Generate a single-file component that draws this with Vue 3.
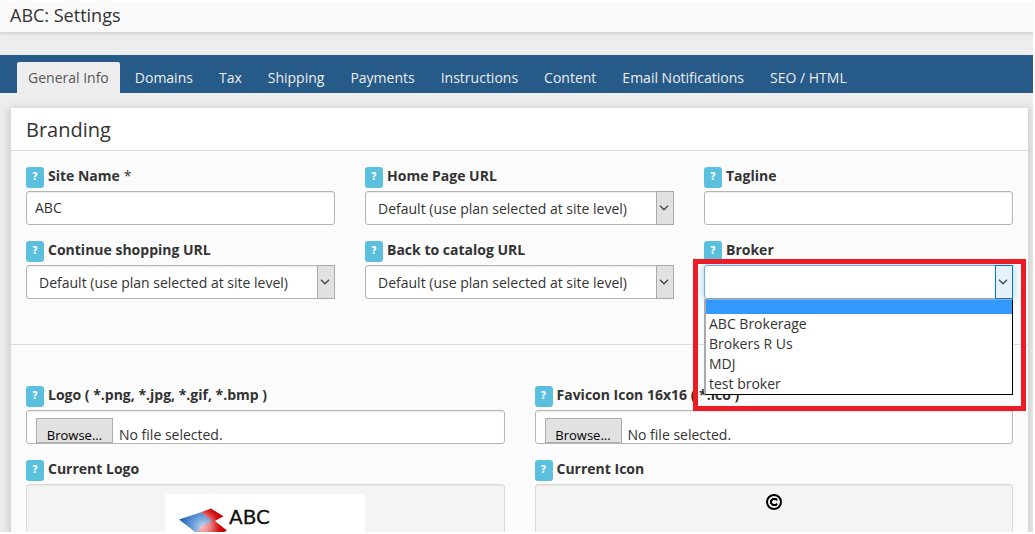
<script setup>
import { ref } from 'vue'

const tabs = ['General Info', 'Domains', 'Tax', 'Shipping', 'Payments', 'Instructions', 'Content', 'Email Notifications', 'SEO / HTML']
const planDefault = 'Default (use plan selected at site level)'
const fields = [
  { id: 'site-name', label: 'Site Name', required: true, type: 'text', value: 'ABC' },
  { id: 'home-url', label: 'Home Page URL', type: 'select' },
  { id: 'tagline', label: 'Tagline', type: 'text', value: '' },
  { id: 'continue-url', label: 'Continue shopping URL', type: 'select' },
  { id: 'catalog-url', label: 'Back to catalog URL', type: 'select' },
  { id: 'broker', label: 'Broker', type: 'broker' }
]
const brokers = ['', 'ABC Brokerage', 'Brokers R Us', 'MDJ', 'test broker']
const broker = ref('')
</script>

<template>
  <div class="page">
    <header class="title-bar"><h1>ABC: Settings</h1></header>
    <nav class="tabs">
      <a v-for="(tab, i) in tabs" :key="tab" href="#" class="tab" :class="{ active: i === 0 }">{{ tab }}</a>
    </nav>
    <main class="panel">
      <h2>Branding</h2>
      <section class="grid three">
        <div v-for="f in fields" :key="f.id" class="field">
          <div class="caption">
            <button type="button" class="help">?</button>
            <label :for="f.id">{{ f.label }}</label><span v-if="f.required" class="star">*</span>
          </div>
          <input v-if="f.type === 'text'" :id="f.id" class="control" type="text" :value="f.value">
          <div v-else class="select" :class="{ open: f.type === 'broker' }">
            <select v-if="f.type === 'select'" :id="f.id" class="control"><option>{{ planDefault }}</option></select>
            <select v-else :id="f.id" v-model="broker" class="control">
              <option v-for="b in brokers" :key="b" :value="b">{{ b }}</option>
            </select>
            <span class="arrow">
              <svg width="10" height="6" viewBox="0 0 10 6"><path d="M1 .8 5 4.8 9 .8" /></svg>
            </span>
            <template v-if="f.type === 'broker'">
              <ul class="menu" role="listbox" aria-label="Broker">
                <li v-for="b in brokers" :key="b" role="option" :aria-selected="b === broker" :class="{ current: b === broker }">{{ b }}</li>
              </ul>
              <div class="highlight"></div>
            </template>
          </div>
        </div>
      </section>
      <section class="grid two">
        <div class="field">
          <div class="caption">
            <button type="button" class="help">?</button>
            <label for="logo">Logo ( *.png, *.jpg, *.gif, *.bmp )</label>
          </div>
          <label class="control file" for="logo">
            <input id="logo" type="file"><span class="browse">Browse...</span><span>No file selected.</span>
          </label>
        </div>
        <div class="field">
          <div class="caption">
            <button type="button" class="help">?</button>
            <label for="favicon">Favicon Icon 16x16 ( *.ico )</label>
          </div>
          <label class="control file" for="favicon">
            <input id="favicon" type="file"><span class="browse">Browse...</span><span>No file selected.</span>
          </label>
        </div>
        <div class="field">
          <div class="caption"><button type="button" class="help">?</button><span class="name">Current Logo</span></div>
          <div class="preview">
            <svg class="logo" width="200" height="60" viewBox="0 0 200 60">
              <defs>
                <radialGradient id="blue" gradientUnits="userSpaceOnUse" cx="39" cy="34" r="24">
                  <stop offset="0" stop-color="#d3e2f5" /><stop offset=".45" stop-color="#6fa3dc" /><stop offset="1" stop-color="#2765b8" />
                </radialGradient>
                <radialGradient id="red" gradientUnits="userSpaceOnUse" cx="36" cy="32" r="24">
                  <stop offset="0" stop-color="#f6c9cb" /><stop offset=".4" stop-color="#e88084" /><stop offset=".75" stop-color="#d31212" /><stop offset="1" stop-color="#c40000" />
                </radialGradient>
              </defs>
              <path d="M14 25.500 36 18.200 48 27 36 38H30Z" fill="url(#blue)" />
              <path d="M36 18.200 46 14.500 58.500 22.300 50 27 62 36.500 48 44H30L36 32 47 27Z" fill="url(#red)" />
              <text x="64" y="30">ABC</text>
            </svg>
          </div>
        </div>
        <div class="field">
          <div class="caption"><button type="button" class="help">?</button><span class="name">Current Icon</span></div>
          <div class="preview">
            <svg width="16" height="16" viewBox="0 0 16 16" fill="none" stroke="#000" stroke-width="2">
              <circle cx="8" cy="8" r="7" /><path d="M11 6.500 10 5H7L5 7v2l2 2h3l1-1.500" />
            </svg>
          </div>
        </div>
      </section>
    </main>
  </div>
</template>

<style>
body {
  margin: 0;
  background: #fff;
}
</style>

<style scoped>
* {
  box-sizing: border-box;
}
.page {
  height: calc(100vh - 3px);
  margin: 1px 2px 2px 0;
  overflow: hidden;
  background: #ededed;
  color: #333;
  font: 14px/20px "Open Sans", sans-serif;
}
.title-bar {
  padding: 0 10px;
  background: #fafafa;
  border-bottom: 1px solid #d8d8d8;
  box-shadow: 0 1px 3px rgba(0, 0, 0, 0.12);
}
h1 {
  margin: 0;
  padding-bottom: 3px;
  font-size: 18px;
  line-height: 28px;
  font-weight: 400;
}
.tabs {
  display: flex;
  gap: 4px;
  margin-top: 22px;
  padding: 7px 17px 0;
  background: #265a88;
}
.tab {
  padding: 6px 11px 5px;
  border-radius: 2px 2px 0 0;
  color: #eee;
  text-decoration: none;
  white-space: nowrap;
}
.tab.active {
  background: #eee;
  color: #555;
}
.panel {
  margin: 15px 5px 0 11px;
  background: #fbfbfb;
  box-shadow: 0 2px 8px 2px rgba(0, 0, 0, 0.15);
}
h2 {
  margin: 0;
  padding: 2px 15px 0;
  background: #fff;
  border-bottom: 1px solid #ddd;
  font-size: 20px;
  line-height: 40px;
  font-weight: 400;
}
.grid {
  display: grid;
  gap: 16px 30px;
  padding: 16px 15px 45px;
}
.three {
  grid-template-columns: repeat(3, minmax(0, 1fr));
}
.two {
  grid-template-columns: repeat(2, minmax(0, 1fr));
  padding-top: 41px;
  border-top: 1px solid #ddd;
}
.caption {
  display: flex;
  gap: 4px;
  height: 24px;
  font-weight: 700;
  line-height: 18px;
}
.help {
  flex: none;
  width: 18px;
  height: 21px;
  padding: 0 0 2px;
  border: 0;
  border-radius: 3px;
  background: #5bc0de;
  color: #fff;
  font: 700 10px/18px "DejaVu Sans", sans-serif;
}
.star {
  font-weight: 400;
}
.control {
  display: block;
  width: 100%;
  height: 34px;
  margin: 0;
  padding: 0 8px 2px;
  border: 1px solid #b5b5b5;
  border-radius: 3px;
  background: #fff;
  box-shadow: inset 0 1px 1px rgba(0, 0, 0, 0.08);
  color: #333;
  font: 14px/20px "Open Sans", sans-serif;
  outline: 0;
}
.select {
  position: relative;
}
.select .control {
  padding: 2px 30px 0 12px;
  appearance: none;
}
.arrow {
  position: absolute;
  top: 0;
  right: 0;
  bottom: 0;
  display: grid;
  place-items: center;
  width: 18px;
  padding-right: 2px;
  border: 1px solid #a9a9a9;
  background: #e1e1e1;
  pointer-events: none;
}
.arrow path {
  fill: none;
  stroke: #444;
  stroke-width: 1.3;
}
.open .control {
  border-color: #66afe9;
  box-shadow: 0 0 8px rgba(102, 175, 233, 0.6);
}
.open .arrow {
  border-color: #0078d7;
  background: #e5f1fb;
}
.menu {
  position: absolute;
  z-index: 2;
  top: 34px;
  left: 0;
  right: 0;
  margin: 0;
  padding: 0;
  border: 1px solid #000;
  border-top-color: #aaa;
  border-left: 2px solid #aaa;
  background: #fff;
  list-style: none;
}
.menu li {
  padding: 0 3px;
  line-height: 20px;
}
.menu .current {
  height: 14px;
  background: #3399ff;
}
.highlight {
  position: absolute;
  z-index: 3;
  top: -6px;
  left: -11px;
  right: -13px;
  height: 152px;
  border: 5px solid #ed1c24;
  pointer-events: none;
}
.file {
  position: relative;
  display: flex;
  gap: 6px;
  overflow: hidden;
  padding: 7px 9px 0;
  line-height: 34px;
}
.file input {
  position: absolute;
  inset: 0;
  opacity: 0;
}
.browse {
  width: 77px;
  border: 1px solid #adadad;
  background: #e1e1e1;
  color: #000;
  font-size: 13px;
  text-align: center;
  line-height: 32px;
}
.preview {
  display: flex;
  justify-content: center;
  align-items: flex-start;
  height: 100px;
  padding: 9px;
  border: 1px solid #d9d9d9;
  border-radius: 3px;
  background: #f4f4f4;
  box-shadow: inset 0 1px 1px rgba(0, 0, 0, 0.06);
}
.logo {
  background: #fff;
}
.logo text {
  fill: #111;
  stroke: #111;
  stroke-width: 0.3;
  font: 20px "DejaVu Sans", sans-serif;
}
</style>
